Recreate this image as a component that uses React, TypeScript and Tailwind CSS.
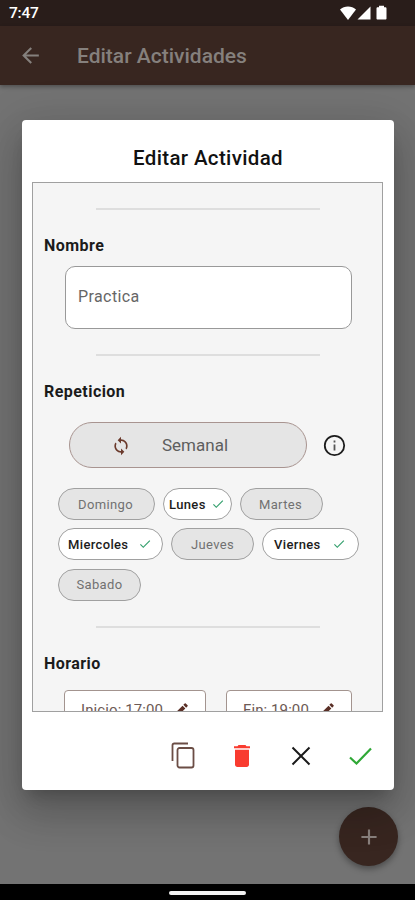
import { clsx } from 'clsx';
import { MdAdd, MdArrowBack, MdCheck, MdEdit, MdSync } from 'react-icons/md';

const days = [
  { name: 'Domingo', active: false, width: 'w-[97px]', pad: 'justify-center pr-[2px]' },
  { name: 'Lunes', active: true, width: 'w-[69px]', pad: 'pl-[5px] pr-[6px] justify-between' },
  { name: 'Martes', active: false, width: 'w-[83px]', pad: 'justify-center pr-[2px]' },
  { name: 'Miercoles', active: true, width: 'w-[105px]', pad: 'pl-[9px] pr-[10px] justify-between' },
  { name: 'Jueves', active: false, width: 'w-[83px]', pad: 'justify-center' },
  { name: 'Viernes', active: true, width: 'w-[97px]', pad: 'pl-[11px] pr-[12px] justify-between' },
  { name: 'Sabado', active: false, width: 'w-[83px]', pad: 'justify-center' },
];

const Divider = () => <div className="ml-[63px] h-[2px] w-[224px] shrink-0 bg-[#dedede]" />;

const SectionTitle = ({ children }: { children: string }) => (
  <h3 className="ml-[11px] mt-[24px] text-[16px] font-bold leading-[24px] tracking-[0.45px] text-[#1b1b1b]">
    {children}
  </h3>
);

const StatusBar = () => (
  <div className="flex h-[26px] items-center justify-between bg-[#291d1a] pl-[9px] pr-[27px] text-white">
    <span className="pt-[2px] text-[15.5px] font-medium leading-none tracking-[-0.2px]">7:47</span>
    <svg width="49" height="16" viewBox="0 0 49 16" fill="currentColor">
      <path d="M1 4.6C5.2.6 12.8.6 17 4.6L9 15z" />
      <path d="M31.5 1.5v13h-13z" />
      <path d="M40 .8h5v1.5h1.4c.6 0 1.1.5 1.1 1.1v10c0 .6-.5 1.1-1.1 1.1h-7.8c-.6 0-1.1-.5-1.1-1.1v-10c0-.6.5-1.1 1.1-1.1H40z" />
    </svg>
  </div>
);

const InfoIcon = () => (
  <svg width="24" height="24" viewBox="0 0 24 24" fill="none">
    <circle cx="11.5" cy="12.5" r="9.7" stroke="#1c1c1c" strokeWidth="1.8" />
    <path d="M11.5 7.5v2M11.5 11.5v6" stroke="#555" strokeWidth="1.8" />
  </svg>
);

const CopyIcon = () => (
  <svg width="24" height="27" viewBox="0 0 24 27" fill="none" stroke="#6b4d45" strokeWidth="1.8">
    <path d="M1.5 19V3.2c0-1 .7-1.7 1.7-1.7H17" />
    <rect x="6.5" y="6" width="16" height="19.5" rx="2" />
  </svg>
);

const TrashIcon = () => (
  <svg width="18" height="24" viewBox="0 0 18 24" fill="#f93b2f">
    <path d="M5.5 1h7l1 1.3H17v2H1v-2h3.5z" />
    <path d="M2 5.8h14V20.5c0 1.4-1 2.5-2.4 2.5H4.4C3 23 2 21.9 2 20.5z" />
  </svg>
);

const DayChips = () => (
  <div className="ml-[25px] mt-[20px] flex w-[310px] flex-wrap gap-x-[8px] gap-y-[8.3px]">
    {days.map((day) => (
      <div
        key={day.name}
        className={clsx(
          'flex h-[32px] items-center rounded-full border border-[#a0a0a0] text-[13px] leading-none tracking-[0.35px]',
          day.width,
          day.pad,
          day.active ? 'bg-white font-medium text-[#1c1c1c]' : 'bg-[#e5e5e5] text-[#717171]'
        )}
      >
        <span>{day.name}</span>
        {day.active && <MdCheck size={14} className="text-[#35a06e]" />}
      </div>
    ))}
  </div>
);

const TimeBox = ({ label, className }: { label: string; className: string }) => (
  <div
    className={clsx(
      'flex h-[40px] shrink-0 items-center justify-between rounded-[4px] border border-[#a3948f] bg-white pl-[16px] pr-[15px] text-[15px] tracking-[0.1px] text-[#6d5a55]',
      className
    )}
  >
    <span>{label}</span>
    <MdEdit size={18} className="text-[#5a2f26]" />
  </div>
);

const EditDialog = () => (
  <div className="flex h-[670px] w-[372px] flex-col rounded-[4px] bg-white shadow-[0_11px_15px_-7px_rgba(0,0,0,0.2),0_24px_38px_3px_rgba(0,0,0,0.14),0_9px_46px_8px_rgba(0,0,0,0.12)]">
    <h2 className="pt-[24px] text-center text-[20.5px] font-medium leading-[28px] tracking-[0.35px] text-[#111]">
      Editar Actividad
    </h2>
    <div className="ml-[10px] mt-[10px] h-[530px] w-[351px] shrink-0 overflow-hidden border border-[#a0a0a0] bg-[#f5f5f5]">
      <div className="h-[25px]" />
      <Divider />
      <SectionTitle>Nombre</SectionTitle>
      <div className="ml-[32px] mt-[8px] flex h-[63px] w-[287px] items-center rounded-[10px] border border-[#999] bg-white pb-[2px] pl-[12px] text-[16px] tracking-[0.4px] text-[#666]">
        Practica
      </div>
      <div className="h-[25px]" />
      <Divider />
      <SectionTitle>Repeticion</SectionTitle>
      <div className="ml-[36px] mt-[18px] flex items-center gap-[16px]">
        <div className="flex h-[46px] w-[238px] items-center rounded-full border border-[#a89490] bg-[#e5e5e5] pl-[41px] pt-[1px] text-[17px] text-[#5e5e5e]">
          <MdSync size={20} className="text-[#6b3a2c]" />
          <span className="ml-[31px]">Semanal</span>
        </div>
        <InfoIcon />
      </div>
      <DayChips />
      <div className="h-[25.4px]" />
      <Divider />
      <SectionTitle>Horario</SectionTitle>
      <div className="ml-[31px] mt-[14px] flex gap-[20px]">
        <TimeBox label="Inicio: 17:00" className="w-[142px]" />
        <TimeBox label="Fin: 19:00" className="w-[126px]" />
      </div>
    </div>
    <div className="flex h-[88px] items-center justify-end pr-[21px] pt-[9px]">
      <div className="mr-[38px]">
        <CopyIcon />
      </div>
      <div className="mr-[40px]">
        <TrashIcon />
      </div>
      <svg width="20" height="20" viewBox="0 0 20 20" fill="none" stroke="#1a1a1a" strokeWidth="2" className="mr-[38px]">
        <path d="M1.5 1.5l17 17M18.5 1.5l-17 17" />
      </svg>
      <svg width="24" height="20" viewBox="0 0 24 20" fill="none" stroke="#2fa836" strokeWidth="2.2">
        <path d="M1 11.5l6.500 6L22 2.500" />
      </svg>
    </div>
  </div>
);

export default function App() {
  return (
    <div className="relative flex h-[900px] w-[415px] flex-col overflow-hidden bg-[#737373] font-['Roboto',sans-serif]">
      <StatusBar />
      <header className="flex h-[59px] items-center bg-[#382620] pl-[18px] text-[#85807d] shadow-[0_2px_4px_rgba(0,0,0,0.3)]">
        <MdArrowBack size={25} />
        <h1 className="ml-[34px] pt-[1px] text-[21px] font-medium leading-none">Editar Actividades</h1>
      </header>
      <main className="flex flex-1 items-end justify-end pb-[18px] pr-[17px]">
        <button className="flex h-[59px] w-[59px] items-center justify-center rounded-full bg-[#382620] text-[#8b827e] shadow-[0_3px_6px_rgba(0,0,0,0.35)]">
          <MdAdd size={26} />
        </button>
      </main>
      <div className="flex h-[16px] items-center justify-center bg-black pt-[2px]">
        <div className="h-[4px] w-[77px] rounded-full bg-[#f2f2f2]" />
      </div>
      <div className="absolute left-0 top-0 flex h-full w-full pl-[22px] pt-[120px]">
        <EditDialog />
      </div>
    </div>
  );
}
